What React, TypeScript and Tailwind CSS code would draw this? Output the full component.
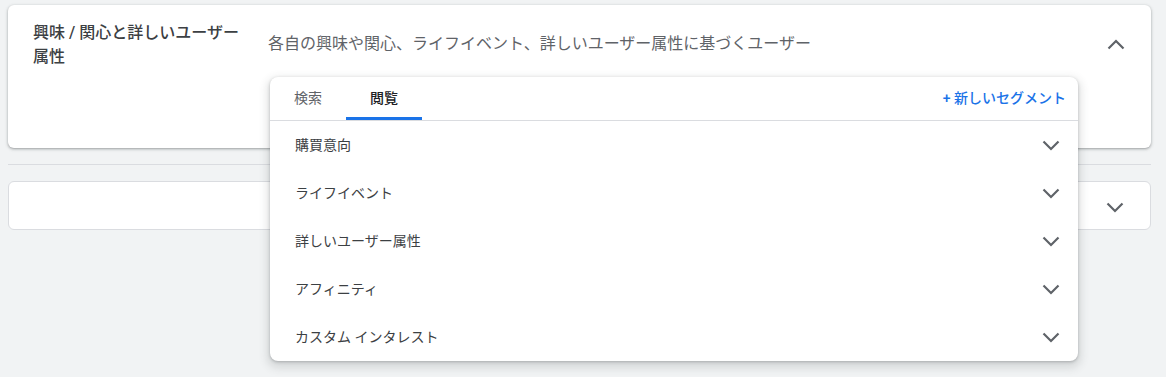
const font = { fontFamily: 'Roboto, "Noto Sans CJK JP", sans-serif' }

const Chevron = ({ up = false }: { up?: boolean }) => (
  <svg width="18" height="11" viewBox="0 0 18 11" className={up ? 'rotate-180' : ''}>
    <polyline points="1.5,1.5 9,9 16.5,1.5" fill="none" stroke="#5f6368" strokeWidth="2.2" />
  </svg>
)

const categories = ['購買意向', 'ライフイベント', '詳しいユーザー属性', 'アフィニティ', 'カスタム インタレスト']

const SegmentPopup = () => (
  <div className="absolute left-[262px] top-[72px] w-[808px] bg-white rounded-lg shadow-[0_1px_3px_rgba(60,64,67,0.3),0_4px_8px_3px_rgba(60,64,67,0.15)] z-10">
    <div className="flex items-end h-[44px] border-b border-[#dadce0]">
      <div className="w-[76px] h-full flex items-center justify-center text-[14px] text-[#5f6368]">検索</div>
      <div className="relative w-[76px] h-full flex items-center justify-center text-[14px] font-medium text-[#202124]">
        閲覧
        <div className="absolute left-0 right-0 bottom-0 h-[3px] bg-[#1a73e8]" />
      </div>
      <div className="ml-auto h-full flex items-center pr-3 text-[14px] font-medium text-[#1a73e8]">+ 新しいセグメント</div>
    </div>
    {categories.map((c) => (
      <div key={c} className="flex items-center h-[48px] pl-[25px] pr-[18px]">
        <span className="text-[14px] text-[#3c4043]">{c}</span>
        <span className="ml-auto"><Chevron /></span>
      </div>
    ))}
  </div>
)

export default function App() {
  return (
    <div className="w-[1166px] h-[377px] bg-[#f1f3f4] px-2 pt-[5px] overflow-hidden" style={font}>
      <div className="relative w-[1143px] h-[143px] bg-white rounded-md shadow-[0_1px_2px_rgba(60,64,67,0.3),0_1px_3px_1px_rgba(60,64,67,0.15)]">
        <div className="flex pl-[25px] pr-[26px]">
          <div className="w-[212px] pt-[16px] text-[16px] leading-[24px] font-medium text-[#3c4043]">
            興味 / 関心と詳しいユーザー属性
          </div>
          <div className="ml-[23px] pt-[27px] text-[16px] leading-[24px] text-[#5f6368]">
            各自の興味や関心、ライフイベント、詳しいユーザー属性に基づくユーザー
          </div>
          <div className="ml-auto pt-[34px]"><Chevron up /></div>
        </div>
        <SegmentPopup />
      </div>
      <div className="w-[1143px] h-px bg-[#dadce0] mt-[16px]" />
      <div className="mt-[16px] w-[1143px] h-[49px] bg-white rounded-md border border-[#dadce0] flex items-center justify-end pr-[26px] pt-[3px]">
        <Chevron />
      </div>
    </div>
  )
}
